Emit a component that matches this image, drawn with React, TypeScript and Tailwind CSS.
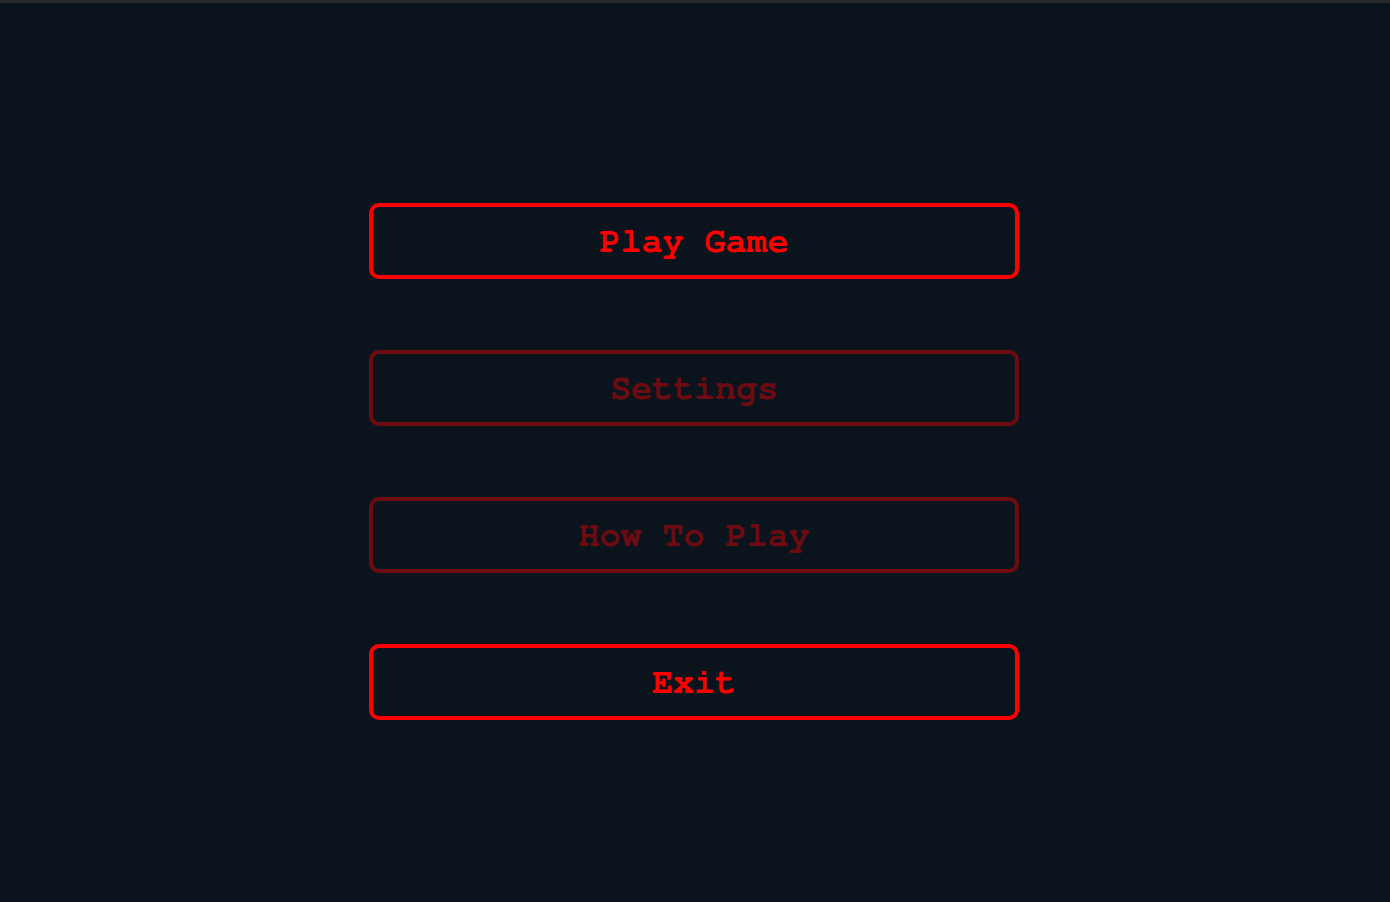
const items = [
  { label: 'Play Game', active: true },
  { label: 'Settings', active: false },
  { label: 'How To Play', active: false },
  { label: 'Exit', active: true },
];

export default function App() {
  return (
    <div className="min-h-[902px] bg-[#0b141d]">
      <div className="h-[3px] bg-[#25282c]" />
      <div className="flex justify-center pr-[2px] pt-[200px]">
        <div className="flex w-[650px] flex-col gap-[71px]">
          {items.map((item) => (
            <button
              key={item.label}
              className={
                item.active
                  ? "h-[76px] w-full rounded-[10px] border-4 border-[#ff0000] bg-transparent pt-[3px] text-[35px] font-bold text-[#ff0000] font-['FreeMono','Courier_New',monospace]"
                  : "h-[76px] w-full rounded-[10px] border-4 border-[#ff0000] bg-transparent pt-[3px] text-[35px] font-bold text-[#ff0000] opacity-40 font-['FreeMono','Courier_New',monospace]"
              }
            >
              {item.label}
            </button>
          ))}
        </div>
      </div>
    </div>
  );
}
